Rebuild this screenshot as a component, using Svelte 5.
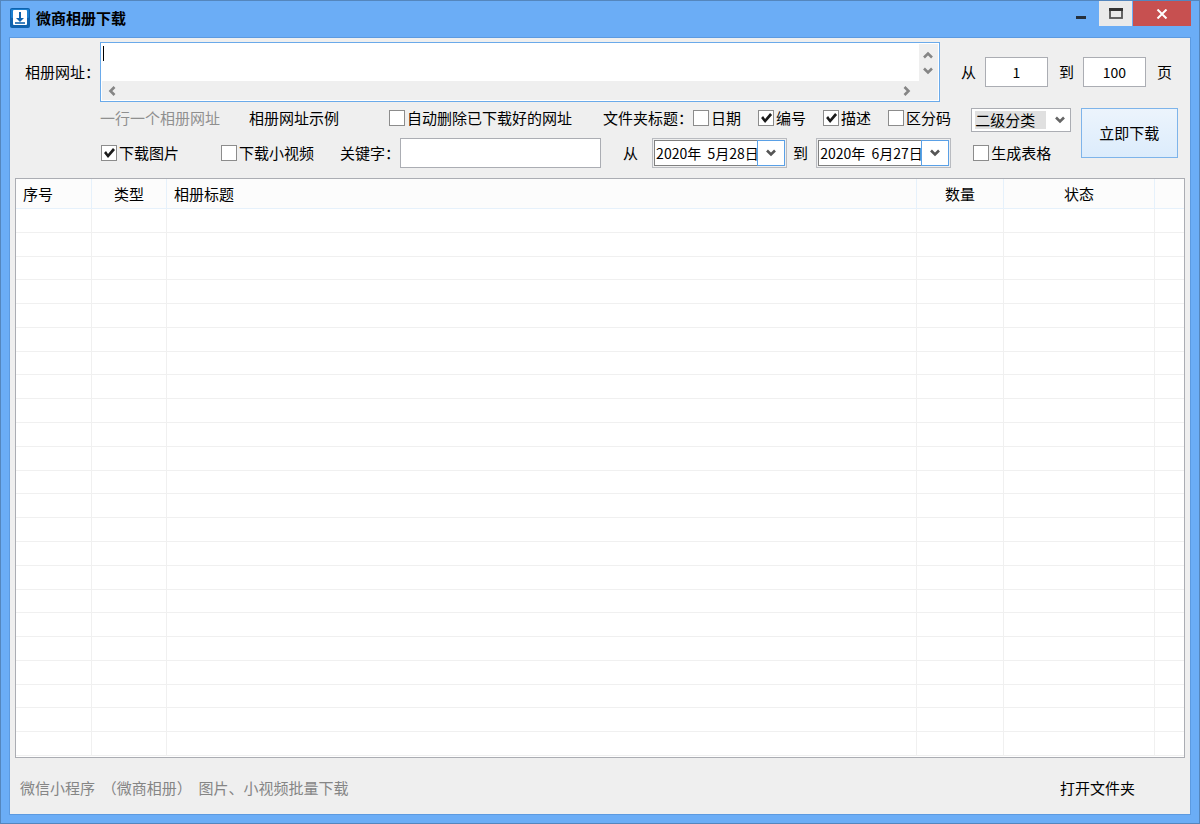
<script>
    let urls = $state('');
    let pageFrom = $state('1');
    let pageTo = $state('100');
    let keyword = $state('');
    let dateFrom = $state('2020年  5月28日');
    let dateTo = $state('2020年  6月27日');
    let category = $state('二级分类');

    let options = $state({
        autoDelete: false,
        date: false,
        number: true,
        description: true,
        code: false,
        images: true,
        videos: false,
        sheet: false
    });

    const rows = Array.from({ length: 23 }, (_, i) => i);
    const columns = Array.from({ length: 6 }, (_, i) => i);
</script>

{#snippet chevron(dir)}
    <svg class="chevron {dir}" viewBox="0 0 10 10" width="10" height="10" aria-hidden="true">
        <path d="M1 2.5 L5 6.5 L9 2.5" fill="none" stroke="currentColor" stroke-width="2.6" />
    </svg>
{/snippet}

{#snippet dateBox(id, value)}
    <div class="date">
        <div class="date-inner">
            <input {id} type="text" {value} />
            <button type="button" aria-label="选择日期">{@render chevron('down')}</button>
        </div>
    </div>
{/snippet}

<div class="window">
    <header class="titlebar">
        <svg class="logo" viewBox="0 0 20 20" width="20" height="20" aria-hidden="true">
            <rect width="20" height="20" rx="2" fill="#0f62ad" />
            <rect x="1" y="1" width="18" height="9" rx="1" fill="#1b7fd0" />
            <rect x="3" y="2" width="14" height="15" rx="1" fill="#fff" />
            <path d="M9 4h2v6h3l-4 4-4-4h3z" fill="#0f62ad" />
            <path d="M5 15h10" stroke="#0f62ad" stroke-width="1.6" />
        </svg>
        <h1>微商相册下载</h1>
        <div class="controls">
            <button type="button" class="min" aria-label="最小化">
                <svg viewBox="0 0 10 3" width="10" height="3"><path d="M0 0h10v3H0z" fill="#26303c" /></svg>
            </button>
            <button type="button" class="max" aria-label="最大化">
                <svg viewBox="0 0 14 11" width="14" height="11">
                    <rect x="1" y="1" width="12" height="9" fill="none" stroke="#555" stroke-width="1.8" />
                    <path d="M0 0h14v3H0z" fill="#333" />
                </svg>
            </button>
            <button type="button" class="close" aria-label="关闭">
                <svg viewBox="0 0 12 10" width="12" height="10">
                    <path d="M1.5 0.5 L10.5 9.5 M10.5 0.5 L1.5 9.5" stroke="#fff" stroke-width="2" />
                </svg>
            </button>
        </div>
    </header>

    <main class="client">
        <div class="url-row">
            <label for="urls">相册网址：</label>
            <div class="url-box">
                <textarea id="urls" wrap="off" bind:value={urls}></textarea>
                <span class="caret"></span>
                <div class="vbar">
                    <button type="button" aria-label="向上">{@render chevron('up')}</button>
                    <button type="button" aria-label="向下">{@render chevron('down')}</button>
                </div>
                <div class="hbar">
                    <button type="button" aria-label="向左">{@render chevron('left')}</button>
                    <button type="button" aria-label="向右">{@render chevron('right')}</button>
                </div>
            </div>
            <div class="pages">
                <label for="page-from">从</label>
                <input id="page-from" type="text" bind:value={pageFrom} />
                <label for="page-to">到</label>
                <input id="page-to" type="text" bind:value={pageTo} />
                <span>页</span>
            </div>
        </div>

        <div class="options">
            <div class="lines">
                <div class="line">
                    <span class="hint">一行一个相册网址</span>
                    <a class="sample" href="#sample">相册网址示例</a>
                    <label class="check auto"><input type="checkbox" bind:checked={options.autoDelete} />自动删除已下载好的网址</label>
                    <span class="folder">文件夹标题：</span>
                    <div class="parts">
                        <label class="check"><input type="checkbox" bind:checked={options.date} />日期</label>
                        <label class="check"><input type="checkbox" bind:checked={options.number} />编号</label>
                        <label class="check"><input type="checkbox" bind:checked={options.description} />描述</label>
                        <label class="check"><input type="checkbox" bind:checked={options.code} />区分码</label>
                    </div>
                </div>
                <div class="line">
                    <label class="check images"><input type="checkbox" bind:checked={options.images} />下载图片</label>
                    <label class="check videos"><input type="checkbox" bind:checked={options.videos} />下载小视频</label>
                    <label class="keyword-label" for="keyword">关键字：</label>
                    <input id="keyword" class="keyword" type="text" bind:value={keyword} />
                    <label class="from" for="date-from">从</label>
                    {@render dateBox('date-from', dateFrom)}
                    <label class="to" for="date-to">到</label>
                    {@render dateBox('date-to', dateTo)}
                </div>
            </div>
            <div class="side">
                <div class="select">
                    <select aria-label="分类" bind:value={category}>
                        <option>二级分类</option>
                    </select>
                    {@render chevron('down')}
                </div>
                <label class="check"><input type="checkbox" bind:checked={options.sheet} />生成表格</label>
            </div>
            <button type="button" class="start">立即下载</button>
        </div>

        <div class="list">
            <table>
                <colgroup>
                    <col class="c-index" />
                    <col class="c-type" />
                    <col />
                    <col class="c-count" />
                    <col class="c-state" />
                    <col class="c-rest" />
                </colgroup>
                <thead>
                    <tr>
                        <th class="left">序号</th>
                        <th>类型</th>
                        <th class="left">相册标题</th>
                        <th>数量</th>
                        <th>状态</th>
                        <th></th>
                    </tr>
                </thead>
                <tbody>
                    {#each rows as row (row)}
                        <tr>
                            {#each columns as column (column)}
                                <td></td>
                            {/each}
                        </tr>
                    {/each}
                </tbody>
            </table>
        </div>

        <footer>
            <span>微信小程序&nbsp; （微商相册）&nbsp; 图片、小视频批量下载</span>
            <a href="#folder">打开文件夹</a>
        </footer>
    </main>
</div>

<style>
    :global(body) {
        margin: 0;
    }

    .window, .window * {
        box-sizing: border-box;
    }

    .window {
        display: flex;
        flex-direction: column;
        height: 100vh;
        min-height: 400px;
        min-width: 1180px;
        padding: 0 8px 8px;
        border: 1px solid #5486bd;
        background: #6badf6;
        color: #000;
        font-family: "Noto Sans CJK SC", sans-serif;
        font-size: 15px;
        line-height: 20px;
    }

    input, textarea, select, button {
        margin: 0;
        padding: 0;
        border: 0;
        border-radius: 0;
        outline: none;
        color: inherit;
        font: inherit;
    }

    button {
        display: flex;
        align-items: center;
        justify-content: center;
        background: none;
    }

    a {
        color: #000;
        text-decoration: none;
    }

    label, span, a {
        white-space: nowrap;
    }

    /* title bar */
    .titlebar {
        display: flex;
        align-items: center;
        flex: none;
        height: 36px;
        padding-bottom: 2px;
    }

    .logo {
        margin: 0 6px 0 1px;
    }

    h1 {
        margin: 0;
        font-size: 15px;
        font-weight: bold;
        line-height: 20px;
    }

    .controls {
        display: flex;
        align-self: flex-start;
        gap: 1px;
        height: 25px;
        margin-left: auto;
    }

    .controls .min {
        width: 34px;
        padding-top: 8px;
    }

    .controls .max {
        width: 33px;
        background: #eaeaea;
    }

    .controls .close {
        width: 58px;
        background: #c75050;
    }

    /* client area */
    .client {
        display: flex;
        flex: 1;
        flex-direction: column;
        min-height: 0;
        border: 1px solid #5c9ae0;
        background: #efefef;
    }

    .url-row {
        display: flex;
        align-items: center;
        padding: 4px 18px 0 15px;
    }

    .url-box {
        position: relative;
        display: grid;
        flex: 1;
        grid-template-columns: 1fr 19px;
        grid-template-rows: 37px 19px;
        padding: 1px;
        border: 1px solid #6aaaea;
        background: #fff;
    }

    textarea {
        padding: 1px 3px;
        overflow: hidden;
        resize: none;
        background: #fff;
        caret-color: transparent;
    }

    .caret {
        position: absolute;
        top: 3px;
        left: 2px;
        width: 1px;
        height: 15px;
        background: #000;
    }

    .vbar, .hbar {
        display: flex;
        background: #efefef;
        color: #858585;
    }

    .vbar {
        flex-direction: column;
        padding-top: 3px;
    }

    .vbar button {
        height: 16px;
    }

    .hbar {
        grid-column: 1 / -1;
        justify-content: space-between;
        padding-right: 21px;
    }

    .hbar button {
        width: 20px;
    }

    .chevron.up {
        transform: rotate(180deg);
    }

    .chevron.left {
        transform: rotate(90deg);
    }

    .chevron.right {
        transform: rotate(-90deg);
    }

    .pages {
        display: flex;
        align-items: center;
        margin-left: 21px;
    }

    .pages input {
        width: 63px;
        height: 30px;
        margin: 0 11px 0 9px;
        border: 1px solid #abadb3;
        background: #fff;
        font-size: 14px;
        text-align: center;
    }

    .options {
        display: flex;
        padding: 1px 12px 0 90px;
    }

    .lines {
        flex: 1;
    }

    .line {
        display: flex;
        align-items: center;
        height: 30px;
        margin-bottom: 5px;
    }

    .line:last-child {
        margin-bottom: 0;
    }

    .hint {
        color: #8f8f8f;
    }

    .sample {
        margin-left: 29px;
    }

    .check {
        display: flex;
        align-items: center;
        gap: 2px;
    }

    .check input {
        flex: none;
        width: 16px;
        height: 16px;
        border: 1px solid #8c8c8c;
        background: #fff;
        appearance: none;
    }

    .check input:checked::before {
        content: "";
        display: block;
        width: 14px;
        height: 14px;
        background: #1a1a1a;
        clip-path: polygon(2px 7px, 4px 5px, 6px 8px, 11px 2px, 13px 4px, 6px 12px);
    }

    .auto {
        margin-left: 50px;
    }

    .folder {
        margin-left: 31px;
    }

    .parts {
        display: flex;
        gap: 17px;
    }

    .images {
        margin-left: 1px;
    }

    .videos {
        margin-left: 42px;
    }

    .keyword-label {
        margin-left: 26px;
    }

    .keyword {
        flex: 1;
        min-width: 0;
        height: 30px;
        padding: 0 4px;
        border: 1px solid #abadb3;
        background: #fff;
    }

    .from {
        margin: 0 14px 0 22px;
    }

    .to {
        margin: 0 8px 0 6px;
    }

    .date {
        width: 135px;
        height: 30px;
        padding: 1px;
        border: 1px solid #b9bbc0;
        background: #efefef;
    }

    .date-inner {
        display: flex;
        height: 26px;
        border: 1px solid #808080;
        background: #fff;
    }

    .date input {
        flex: 1;
        min-width: 0;
        padding-left: 1px;
        background: none;
        font-size: 14px;
    }

    .date button {
        flex: none;
        width: 28px;
        margin: -1px;
        border: 1px solid #5aa0e6;
        background: #fff;
        color: #555;
    }

    .side {
        width: 100px;
        margin: 5px 10px 0 20px;
    }

    .side .check {
        height: 30px;
        margin: 6px 0 0 2px;
    }

    .select {
        position: relative;
        border: 1px solid #abadb3;
        background: #fff;
        color: #666;
    }

    .select select {
        display: block;
        width: 100%;
        height: 22px;
        padding: 2px 24px 2px 3px;
        background: #e0e0e0 content-box;
        color: #000;
        line-height: 18px;
        appearance: none;
    }

    .select .chevron {
        position: absolute;
        top: 6px;
        right: 5px;
        pointer-events: none;
    }

    .start {
        width: 98px;
        height: 50px;
        margin-top: 5px;
        border: 1px solid #7eb4ea;
        background: linear-gradient(#ecf4fc, #dcecfc);
    }

    /* list */
    .list {
        display: flex;
        flex: 1;
        min-height: 0;
        margin: 10px 5px 0;
        padding-bottom: 1px;
        border: 1px solid #abadb3;
        background: #fff;
    }

    table {
        width: 100%;
        height: 100%;
        border-collapse: separate;
        border-spacing: 0;
        table-layout: fixed;
    }

    .c-index {
        width: 76px;
    }

    .c-type {
        width: 75px;
    }

    .c-count {
        width: 87px;
    }

    .c-state {
        width: 151px;
    }

    .c-rest {
        width: 29px;
    }

    th {
        height: 30px;
        padding: 0;
        border-right: 1px solid #e6f1fb;
        border-bottom: 1px solid #e6f1fb;
        background: #fcfcfc;
        font-weight: normal;
    }

    th.left {
        padding-left: 7px;
        text-align: left;
    }

    td {
        padding: 0;
        border-right: 1px solid #f0f0f0;
        border-bottom: 1px solid #f0f0f0;
    }

    th:last-child, td:last-child {
        border-right: 0;
    }

    footer {
        display: flex;
        align-items: center;
        justify-content: space-between;
        flex: none;
        height: 56px;
        padding: 4px 55px 0 10px;
        color: #858585;
    }
</style>
